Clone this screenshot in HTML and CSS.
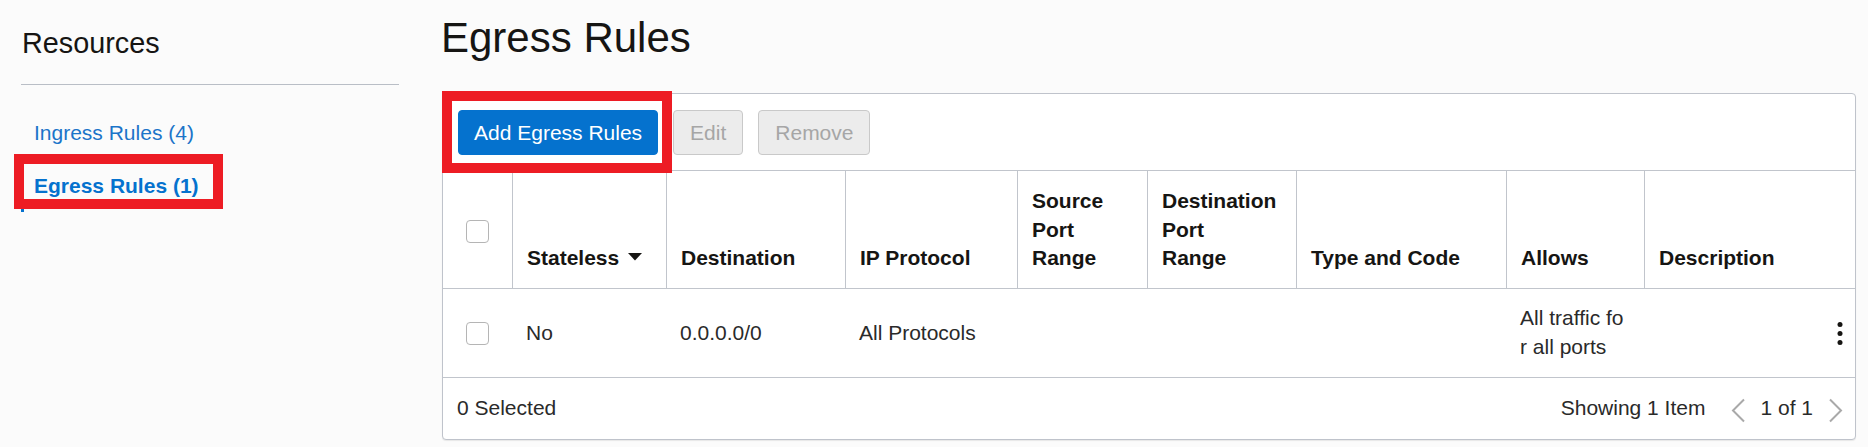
FILE: index.html
```html
<!DOCTYPE html>
<html lang="en">
<head>
<meta charset="utf-8">
<title>Egress Rules</title>
<link rel="stylesheet" href="styles.css">
</head>
<body>
<div class="page">
  <aside class="sidebar">
    <h2 class="side-title">Resources</h2>
    <div class="side-divider"></div>
    <nav class="side-nav">
      <a class="side-link">Ingress Rules (4)</a>
      <a class="side-link active">Egress Rules (1)<span class="annot annot-side"></span></a>
    </nav>
  </aside>
  <main class="main">
    <h1 class="title">Egress Rules</h1>
    <section class="panel">
      <div class="toolbar">
        <div class="annot-wrap">
          <button class="btn btn-primary">Add Egress Rules</button>
          <span class="annot annot-btn"></span>
        </div>
        <button class="btn btn-disabled">Edit</button>
        <button class="btn btn-disabled">Remove</button>
      </div>
      <div class="grid head">
        <div class="cell cell-check head-check"><span class="checkbox"></span></div>
        <div class="cell th"><span>Stateless</span><svg class="sort" width="14" height="8" viewBox="0 0 14 8"><polygon points="0,0 14,0 7,7.5" fill="#161513"/></svg></div>
        <div class="cell th"><span>Destination</span></div>
        <div class="cell th"><span>IP Protocol</span></div>
        <div class="cell th"><span>Source<br>Port<br>Range</span></div>
        <div class="cell th"><span>Destination<br>Port<br>Range</span></div>
        <div class="cell th"><span>Type and Code</span></div>
        <div class="cell th"><span>Allows</span></div>
        <div class="cell th"><span>Description</span></div>
      </div>
      <div class="grid body-row">
        <div class="cell cell-check"><span class="checkbox"></span></div>
        <div class="cell td">No</div>
        <div class="cell td">0.0.0.0/0</div>
        <div class="cell td">All Protocols</div>
        <div class="cell td"></div>
        <div class="cell td"></div>
        <div class="cell td"></div>
        <div class="cell td td-wrap">All traffic for all ports</div>
        <div class="cell td td-actions">
          <svg class="kebab" width="6" height="23" viewBox="0 0 6 23"><circle cx="3" cy="2.6" r="2.5" fill="#161513"/><circle cx="3" cy="11.5" r="2.5" fill="#161513"/><circle cx="3" cy="20.4" r="2.5" fill="#161513"/></svg>
        </div>
      </div>
      <div class="footer">
        <span class="selected">0 Selected</span>
        <div class="pager">
          <span class="showing">Showing 1 Item</span>
          <svg class="chev" width="15" height="25" viewBox="0 0 15 25"><polyline points="13,1.5 2,12.5 13,23.5" fill="none" stroke="#a9a9a9" stroke-width="2"/></svg>
          <span class="page-num">1 of 1</span>
          <svg class="chev" width="15" height="25" viewBox="0 0 15 25"><polyline points="2,1.5 13,12.5 2,23.5" fill="none" stroke="#a9a9a9" stroke-width="2"/></svg>
        </div>
      </div>
    </section>
  </main>
</div>
</body>
</html>
```

FILE: styles.css
```css
* {
  box-sizing: border-box;
}

body {
  margin: 0;
  background: #fbfbfb;
  font-family: "Liberation Sans", Arial, sans-serif;
  color: #161513;
}

.page {
  display: flex;
  height: 447px;
  overflow: hidden;
}

/* Sidebar */
.sidebar {
  flex: none;
  width: 378px;
  margin-left: 21px;
  padding-top: 26px;
}

.side-title {
  margin: 0 0 0 1px;
  font-size: 28.8px;
  line-height: 34px;
  font-weight: normal;
  color: #161513;
}

.side-divider {
  margin-top: 24px;
  border-top: 1px solid #b9bec6;
}

.side-nav {
  margin-top: 22px;
}

.side-link {
  display: block;
  position: relative;
  padding: 12px 0 12px 10px;
  border-left: 3px solid transparent;
  font-size: 21px;
  line-height: 28.6px;
  color: #1b74c9;
  text-decoration: none;
}

.side-link.active {
  border-left-color: #0572ce;
  font-weight: bold;
  color: #0572ce;
}

/* Annotation boxes */
.annot {
  position: absolute;
  border: 10px solid #ed1c24;
  pointer-events: none;
}

.annot-side {
  left: -10px;
  top: -6px;
  width: 209px;
  height: 55px;
}

.annot-wrap {
  position: relative;
  display: flex;
}

.annot-btn {
  left: -16px;
  top: -19px;
  width: 230px;
  height: 82px;
}

/* Main */
.main {
  flex: 1;
  min-width: 0;
  margin-left: 43px;
  margin-right: 12px;
}

.title {
  margin: 14px 0 0 -1px;
  font-size: 42px;
  line-height: 48px;
  font-weight: normal;
  color: #161513;
}

.panel {
  margin-top: 31px;
  background: #fff;
  border: 1px solid #bfc3cb;
  border-radius: 4px;
  box-shadow: 0 1px 1px rgba(0, 0, 0, 0.08);
}

.toolbar {
  display: flex;
  gap: 15px;
  padding: 16px 15px 15px;
  border-bottom: 1px solid #c1c5cc;
}

.btn {
  height: 45px;
  padding: 0 16px;
  font-family: inherit;
  font-size: 21px;
  border-radius: 4px;
  border: 1px solid;
  cursor: default;
}

.btn-primary {
  padding: 0 15px;
  background: #0572ce;
  border-color: #0572ce;
  color: #fff;
}

.btn-disabled {
  background: #ececec;
  border-color: #c9c9c9;
  color: #a6a6a6;
}

/* Table grid */
.grid {
  display: grid;
  grid-template-columns: 69px 154px 179px 172px 130px 149px 210px 138px 1fr;
  border-bottom: 1px solid #c1c5cc;
}

.cell {
  display: flex;
  min-width: 0;
  line-height: 28.6px;
  font-size: 21px;
}

.head {
  height: 118px;
}

.th {
  align-items: flex-end;
  padding: 16px 14px 15px 14px;
  border-left: 1px solid #c1c5cc;
  font-weight: bold;
  color: #161513;
}

.sort {
  flex: none;
  margin-left: 9px;
  margin-bottom: 12px;
}

.cell-check {
  align-items: center;
  justify-content: center;
}

.head-check {
  padding-top: 3px;
}

.checkbox {
  display: block;
  width: 23px;
  height: 23px;
  border: 1px solid #b5b5b5;
  border-radius: 4px;
  background: #fff;
}

.body-row {
  height: 89px;
}

.td {
  align-items: center;
  padding: 0 14px;
  color: #2a2a2a;
}

.td-wrap {
  padding-right: 15px;
  word-break: break-all;
}

.td-actions {
  justify-content: flex-end;
  padding-right: 12px;
}

/* Footer */
.footer {
  height: 61px;
  display: flex;
  align-items: center;
  justify-content: space-between;
  padding: 0 12px 0 14px;
  font-size: 21px;
  line-height: 28.6px;
  color: #2a2a2a;
}

.pager {
  display: flex;
  align-items: center;
}

.showing {
  margin-right: 26px;
}

.page-num {
  margin: 0 15px 0 14px;
}

.chev {
  display: block;
  margin-top: 4px;
}
```
